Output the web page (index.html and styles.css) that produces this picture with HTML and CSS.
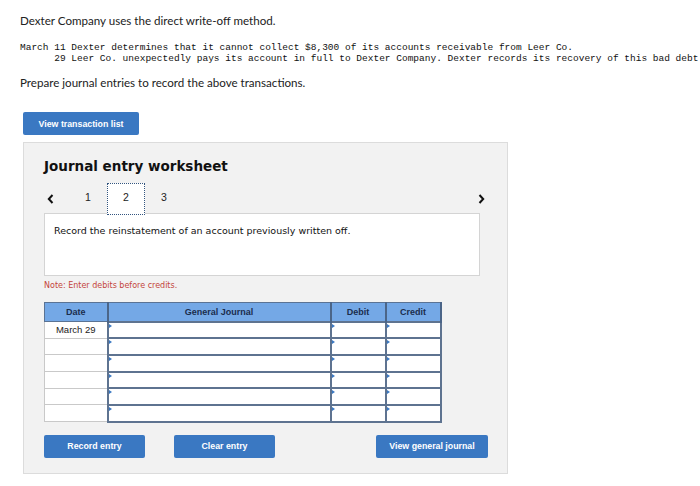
FILE: index.html
```html
<!DOCTYPE html>
<html>
<head>
<meta charset="utf-8">
<link rel="stylesheet" href="styles.css">
</head>
<body>
<div class="page">
  <p class="intro">Dexter Company uses the direct write-off method.</p>
  <pre class="trans">March 11 Dexter determines that it cannot collect $8,300 of its accounts receivable from Leer Co.
      29 Leer Co. unexpectedly pays its account in full to Dexter Company. Dexter records its recovery of this bad debt</pre>
  <p class="intro prepare">Prepare journal entries to record the above transactions.</p>
  <button class="btn btn-list">View transaction list</button>

  <div class="worksheet">
    <h2 class="ws-title">Journal entry worksheet</h2>
    <div class="nav">
      <span class="arrow arrow-left">
        <svg width="7" height="10" viewBox="0 0 7 10"><path d="M5.5 1 L1.8 5 L5.5 9" fill="none" stroke="#111" stroke-width="2"/></svg>
      </span>
      <span class="tab">1</span>
      <span class="tab tab-active">2</span>
      <span class="tab">3</span>
      <span class="arrow arrow-right">
        <svg width="7" height="10" viewBox="0 0 7 10"><path d="M1.5 1 L5.2 5 L1.5 9" fill="none" stroke="#111" stroke-width="2"/></svg>
      </span>
    </div>
    <div class="desc">Record the reinstatement of an account previously written off.</div>
    <p class="note">Note: Enter debits before credits.</p>
    <table class="journal">
      <thead>
        <tr><th class="c-date">Date</th><th class="c-acct">General Journal</th><th class="c-num">Debit</th><th class="c-num">Credit</th></tr>
      </thead>
      <tbody>
        <tr><td class="date">March 29</td><td class="in"><i></i></td><td class="in"><i></i></td><td class="in"><i></i></td></tr>
        <tr><td class="date"></td><td class="in"><i></i></td><td class="in"><i></i></td><td class="in"><i></i></td></tr>
        <tr><td class="date"></td><td class="in"><i></i></td><td class="in"><i></i></td><td class="in"><i></i></td></tr>
        <tr><td class="date"></td><td class="in"><i></i></td><td class="in"><i></i></td><td class="in"><i></i></td></tr>
        <tr><td class="date"></td><td class="in"><i></i></td><td class="in"><i></i></td><td class="in"><i></i></td></tr>
        <tr><td class="date"></td><td class="in"><i></i></td><td class="in"><i></i></td><td class="in"><i></i></td></tr>
      </tbody>
    </table>
    <div class="actions">
      <button class="btn btn-action">Record entry</button>
      <button class="btn btn-action btn-clear">Clear entry</button>
      <button class="btn btn-action btn-view">View general journal</button>
    </div>
  </div>
</div>
</body>
</html>
```

FILE: styles.css
```css
* { box-sizing: border-box; }
html, body { margin: 0; padding: 0; background: #fff; overflow: hidden; }
body { font-family: Lato, "Liberation Sans", sans-serif; color: #222; }

.page { padding: 13px 0 0 20px; }

.intro {
  margin: 0;
  font-size: 11.6px;
  line-height: 15px;
  color: #222;
}

.trans {
  margin: 14px 0 0 0;
  font-family: "Liberation Mono", monospace;
  font-size: 9.5px;
  line-height: 11px;
  color: #111;
  white-space: pre;
}

.prepare { margin-top: 11px; }

.btn {
  border: none;
  background: #3a78c2;
  color: #fff;
  font-family: "Liberation Sans", Arial, sans-serif;
  font-weight: bold;
  font-size: 8.8px;
  border-radius: 2px;
  height: 23px;
  padding: 0;
  cursor: pointer;
}

.btn-list {
  display: block;
  margin: 22px 0 0 3px;
  width: 116px;
}

.worksheet {
  margin: 7px 0 0 3px;
  width: 485px;
  height: 332px;
  background: #f2f2f2;
  border: 1px solid #dcdcdc;
  padding: 15px 20px 0 20px;
}

.ws-title {
  margin: 0;
  font-family: "DejaVu Sans", Verdana, sans-serif;
  font-weight: bold;
  font-size: 13.5px;
  line-height: 17px;
  color: #111;
}

.nav {
  display: flex;
  align-items: flex-start;
  height: 30px;
  margin-top: 8px;
}

.arrow {
  display: flex;
  align-items: center;
  height: 30px;
}
.arrow-left { width: 25px; padding-left: 3px; }
.arrow-left svg, .arrow-right svg { margin-top: 1px; }
.arrow-right { margin-left: auto; margin-right: 2px; }

.tab {
  width: 38px;
  height: 30px;
  display: flex;
  align-items: center;
  justify-content: center;
  font-family: "Liberation Sans", Arial, sans-serif;
  font-size: 10.5px;
  color: #222;
  padding-bottom: 2px;
}

.tab-active {
  height: 32px;
  background: #fff;
  border: 1px dotted #33557f;
  position: relative;
  z-index: 1;
  padding-bottom: 4px;
}

.desc {
  margin-right: 7px;
  height: 63px;
  background: #fff;
  border: 1px solid #d4d4d4;
  padding: 10px 0 0 9px;
  font-family: "DejaVu Sans", Verdana, sans-serif;
  font-size: 9.5px;
  line-height: 14px;
  color: #111;
}

.note {
  margin: 4px 0 0 0;
  font-family: "DejaVu Sans", Verdana, sans-serif;
  font-size: 8px;
  line-height: 12px;
  color: #c4453c;
}

.journal {
  margin-top: 10px;
  width: 396px;
  border-collapse: collapse;
  table-layout: fixed;
  font-family: "Liberation Sans", Arial, sans-serif;
}

.journal th {
  height: 19px;
  background: #74a8e6;
  color: #1b2d4d;
  font-size: 9px;
  font-weight: bold;
  border: 1px solid #5a7394;
  border-right: 2px solid #4b6588;
  padding: 0;
}
.c-date { width: 63px; }
.c-acct { width: 223px; }
.c-num { width: 55px; }

.journal td {
  height: 16.7px;
  padding: 0;
  background: #fff;
}

.journal td.date {
  border: 1px solid #c9c9c9;
  font-size: 9.5px;
  color: #222;
  text-align: center;
}

.journal td.in {
  border: 2px solid #5e7390;
  position: relative;
}

.journal td.in i {
  position: absolute;
  left: 0;
  top: 1px;
  width: 0;
  height: 0;
  border-top: 2px solid transparent;
  border-bottom: 2px solid transparent;
  border-left: 3px solid #3a78c2;
}

.actions {
  display: flex;
  margin-top: 12px;
  margin-right: -1px;
}

.btn-action { width: 101px; }
.btn-clear { margin-left: 29px; }
.btn-view { margin-left: auto; width: 112px; }
```
